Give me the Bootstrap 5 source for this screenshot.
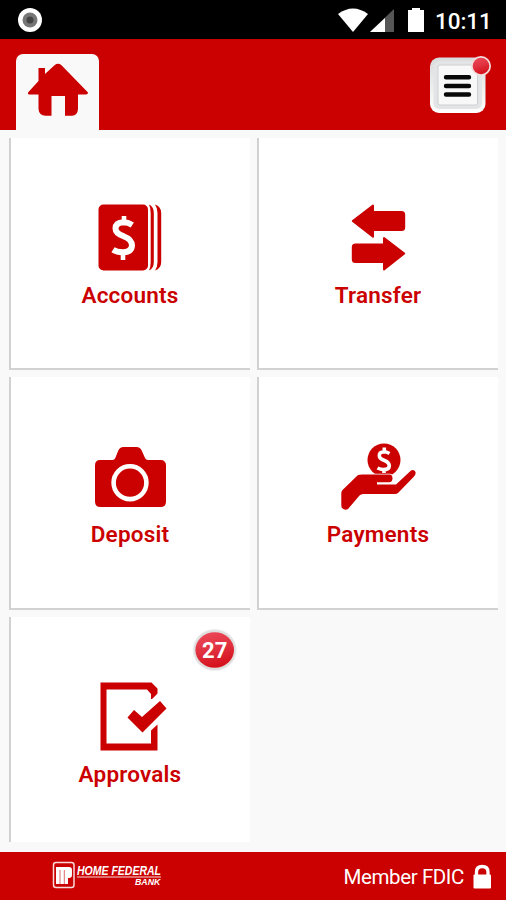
<!DOCTYPE html>
<html lang="en">
<head>
<meta charset="utf-8">
<meta name="viewport" content="width=device-width, initial-scale=1">
<title>Home Federal Bank</title>
<link href="https://cdn.jsdelivr.net/npm/bootstrap@5.3.0/dist/css/bootstrap.min.css" rel="stylesheet">
<style>
:root { --brand: #cb0000; }
body { background: #f9f9f9; font-family: Roboto, "Liberation Sans", sans-serif; width: 506px; height: 900px; overflow: hidden; }
svg { display: block; }
.status-bar { height: 39px; background: #000; color: #fff; padding: 0 14px 0 17px; }
.clock { font-size: 22.5px; font-weight: 500; line-height: 39px; width: 57px; margin-left: 10px; margin-top: 3px; letter-spacing: -.1px; }
.top-bar { height: 91px; background: var(--brand); padding: 15px 14px 0 16px; }
.home-tab { width: 83px; height: 76px; background: #f9f9f9; border-radius: 7px 7px 0 0; }
.menu-btn { width: 64px; height: 64px; }
.tiles { display: grid; grid-template-columns: 241px 241px; grid-template-rows: 232px 233px 225px; gap: 7px; padding: 8px 8px 0 9px; height: 722px; }
.tile { background: #fff; box-shadow: inset 2px -2px 0 #d1d1d1; color: var(--brand); padding-top: 60px; text-decoration: none; font-size: 22.5px; font-weight: 600; line-height: 26px; letter-spacing: .2px; }
.tile:hover { color: var(--brand); }
.tile span { padding-left: 1px; }
.tile svg { margin-bottom: 4px; }
.tile-last { box-shadow: inset 2px 0 0 #d1d1d1; }
.count { top: 10px; left: 182px; width: 46px; height: 46px; }
.foot { height: 48px; background: var(--brand); color: #fff; padding: 0 14px 0 52px; }
.member { font-size: 20.5px; line-height: 48px; letter-spacing: -.4px; padding-top: 1px; margin-right: 8px; }
</style>
</head>
<body>
<div class="status-bar d-flex align-items-center">
  <svg width="26" height="26" viewBox="0 0 26 26" class="me-auto"><circle cx="13" cy="13" r="12" fill="#fff"/><circle cx="13" cy="13" r="7.5" fill="#777"/><circle cx="13" cy="13" r="3.5" fill="#444"/></svg>
  <svg width="88" height="28" viewBox="337 6 88 28"><path d="M338 14Q353 3 368 14L353 32Z" fill="#fff"/><path d="M394 9V32H370Z" fill="#565656"/><path d="M385 18V32H370Z" fill="#fff"/><path d="M408 10H412V8H420V10H424V32H408Z" fill="#fff"/></svg>
  <span class="clock">10:11</span>
</div>

<header class="top-bar d-flex justify-content-between">
  <a href="#" class="home-tab" aria-label="Home"><svg width="83" height="76" viewBox="16 54 83 76"><path fill="#cb0000" d="M28 92.500L38.500 81V68H45V74L54.500 65.200Q58 62.500 61.500 65.200L88 92.500Q88 94.500 86 94.500H78V109Q77.500 115.500 72 115.800H65V96H51.500V115.800H45.500Q39 115.500 38.500 109V94.500H29Q27.500 94.500 28 92.500Z"/></svg></a>
  <button class="menu-btn btn p-0 border-0" aria-label="Menu">
    <svg width="64" height="64" viewBox="428 54 64 64">
      <defs>
        <linearGradient id="gloss" x1="0" y1="0" x2=".3" y2="1"><stop offset="0" stop-color="#ee4a5a"/><stop offset=".5" stop-color="#e23544"/><stop offset="1" stop-color="#d6141f"/></linearGradient>
        <linearGradient id="bezel" x1="0" y1="0" x2="0" y2="1"><stop offset="0" stop-color="#d9dadb"/><stop offset="1" stop-color="#fff"/></linearGradient>
      </defs>
      <rect x="430" y="57.500" width="55.500" height="55.500" rx="9" fill="url(#bezel)"/>
      <rect x="433.500" y="61" width="48.500" height="48" rx="6" fill="#e3e4e5"/>
      <rect x="438" y="65" width="39.500" height="40" rx="2" fill="#f8f8f8" stroke="#cfd0d1"/>
      <path d="M446 77.300H469M446 86H469M446 94.500H469" stroke="#080808" stroke-width="4.400" stroke-linecap="round"/>
      <circle cx="481" cy="66" r="10" fill="#f1dede"/><circle cx="481" cy="66" r="8.300" fill="url(#gloss)"/>
    </svg>
  </button>
</header>

<main class="tiles">
  <a href="#" class="tile d-flex flex-column align-items-center">
    <svg width="90" height="80" viewBox="85 198 90 80"><rect x="98.500" y="204.500" width="49.500" height="66" rx="5" fill="#cb0000"/><path fill="#cb0000" d="M149 204.500Q153.800 206.500 153.800 213V262Q153.800 268.500 149 270.500Q150.700 267 150.700 262V213Q150.700 208 149 204.500ZM155 204.500Q161.200 206.500 161.200 213V262Q161.200 268.500 155 270.500Q157.500 267 157.500 262V213Q157.500 208 155 204.500Z"/><path d="M132.300 225Q128 222.300 123.500 222.300Q115.500 222.600 115.500 228.600Q115.500 233.500 123.500 236.200Q132 239.300 132 245.500Q131.500 252.300 122.500 252.300Q117 252.300 113 249.800" fill="none" stroke="#fff" stroke-width="6"/><path d="M124 216V222M123 252V260" stroke="#fff" stroke-width="4.600"/></svg>
    <span>Accounts</span>
  </a>
  <a href="#" class="tile d-flex flex-column align-items-center">
    <svg width="90" height="80" viewBox="333 198 90 80"><g fill="#cb0000" stroke="#cb0000" stroke-width="2" stroke-linejoin="round"><path d="M352.800 221L373 205.500V212H401.500Q404.200 212 404.200 214.500V227.500Q404.200 230 401.500 230H373V236.800Z"/><path d="M404.200 253.500L384 238V244.500H355.500Q352.800 244.500 352.800 247V259.500Q352.800 262 355.500 262H384V269.500Z"/></g></svg>
    <span>Transfer</span>
  </a>
  <a href="#" class="tile d-flex flex-column align-items-center">
    <svg width="90" height="80" viewBox="85 437 90 80"><path fill="#cb0000" d="M100 460H112.500Q114.500 460 115.300 458L118.300 450.500Q119.700 447 123.500 447H136.500Q140.300 447 141.700 450.500L145 458Q146 460 148 460H160.500Q166 460 166 465.500V501.500Q166 507 160.500 507H100.500Q95 507 95 501.500V465.500Q95 460 100 460Z"/><circle cx="130" cy="482.700" r="16.400" fill="none" stroke="#fff" stroke-width="4.600"/></svg>
    <span>Deposit</span>
  </a>
  <a href="#" class="tile d-flex flex-column align-items-center">
    <svg width="90" height="80" viewBox="333 437 90 80"><circle cx="384" cy="460" r="16.500" fill="#cb0000"/><path d="M389.500 453.500Q386.500 451.800 384 451.800Q379.300 452 379.300 455.700Q379.300 458.500 384.500 460.500Q389.300 462.500 389.300 466Q389 469.600 383.500 469.600Q380.500 469.600 377.500 468M384.300 447.500V452M384 470V473" fill="none" stroke="#fff" stroke-width="3.600"/><path fill="#cb0000" stroke="#fff" stroke-width="1.500" paint-order="stroke" d="M358 475Q360 474.500 362 474.500H390Q392.500 475 392.500 478.500Q392.500 482 389 482.300H377V484.500H396L411 470.500Q414 469 415.500 472Q416 474.500 414 476.500L398.500 492.500Q397 494 395 494H363Q361 494 359.500 495.500L348 509Q345 511 342 508Q341.300 507 341.300 505V493Q341.300 491.500 342.500 490Z"/></svg>
    <span>Payments</span>
  </a>
  <a href="#" class="tile tile-last position-relative d-flex flex-column align-items-center">
    <svg width="90" height="80" viewBox="85 677 90 80"><path fill="#cb0000" fill-rule="evenodd" d="M100.500 682.500H151.500L157.500 688.500V693.500L152 699H151V694L147 689.500H106.500V743.500H151V730.500L157.500 724.500V750.500H100.500Z"/><path d="M127.500 717.500L134 710L142 717L160 701L166.500 708.500L142.500 732.500Z" fill="#cb0000"/></svg>
    <span>Approvals</span>
    <svg class="count position-absolute m-0" viewBox="191 627 46 46"><ellipse cx="214.700" cy="650" rx="22" ry="21" fill="#eee"/><ellipse cx="214.700" cy="650" rx="21" ry="20" fill="#dfdfdf"/><ellipse cx="214.700" cy="650" rx="19.300" ry="17.800" fill="url(#gloss)"/><text x="214.700" y="658" text-anchor="middle" font-size="22" font-weight="700" letter-spacing="0" fill="#fff">27</text></svg>
  </a>
</main>

<footer class="foot d-flex align-items-center">
  <svg class="me-auto" width="122" height="32" viewBox="52 860 122 32" fill="#fff"><rect x="53.500" y="862.500" width="20.500" height="25" rx="2.500" fill="none" stroke="#fff" stroke-opacity=".85" stroke-width="1.500"/><path d="M56 867H69Q72 867 72 870V875Q72 878 69 878H68V884H64V884H56V877Z"/><path d="M60 870V884M64.300 870V884" stroke="#cb0000" stroke-width=".6"/><text x="77" y="874.500" font-family="Liberation Sans, sans-serif" font-size="12" font-weight="700" font-style="italic" textLength="84" lengthAdjust="spacingAndGlyphs">HOME FEDERAL</text><path d="M77 876.500H161V877.500H77Z" opacity=".85"/><text x="135" y="885" font-family="Liberation Sans, sans-serif" font-size="9.500" font-weight="700" font-style="italic" textLength="25.500" lengthAdjust="spacingAndGlyphs">BANK</text></svg>
  <span class="member">Member FDIC</span>
  <svg width="20" height="28" viewBox="471 861 20 28"><path d="M475.500 875V871Q475.500 865.500 481.200 865.500Q487 865.500 487 871V875" fill="none" stroke="#fff" stroke-width="3.300"/><rect x="472.500" y="873.500" width="17.500" height="14" rx="1" fill="#fff"/></svg>
</footer>
<script src="https://cdn.jsdelivr.net/npm/bootstrap@5.3.0/dist/js/bootstrap.bundle.min.js"></script>
</body>
</html>
